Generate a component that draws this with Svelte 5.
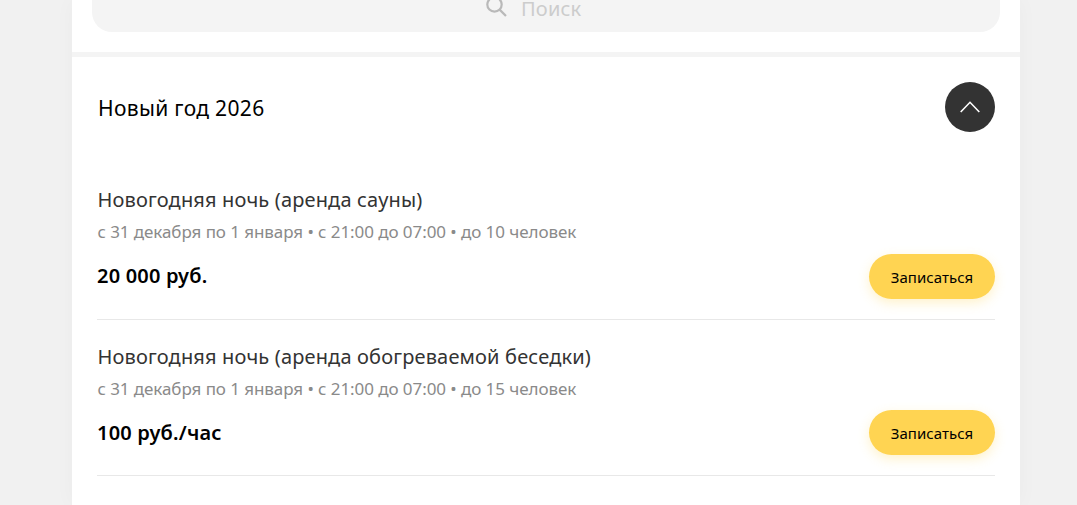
<script>
    let open = $state(true);
    let query = $state("");

    const services = [
        {
            id: 1,
            title: "Новогодняя ночь (аренда сауны)",
            description: "с 31 декабря по 1 января • с 21:00 до 07:00 • до 10 человек",
            price: "20 000 руб."
        },
        {
            id: 2,
            title: "Новогодняя ночь (аренда обогреваемой беседки)",
            description: "с 31 декабря по 1 января • с 21:00 до 07:00 • до 15 человек",
            price: "100 руб./час"
        }
    ];
</script>

<div class="page">
    <main class="container">
        <div class="search">
            <label class="search-field">
                <svg class="search-icon" viewBox="0 0 22 22" width="22" height="22">
                    <circle cx="8.5" cy="8.5" r="7.2" />
                    <path d="M13.6 13.6L20 20" />
                </svg>
                <input type="text" placeholder="Поиск" bind:value={query} />
            </label>
        </div>

        <section class="category">
            <header class="category-header">
                <h2>Новый год 2026</h2>
                <button class="toggle" class:closed={!open} aria-label="Свернуть" onclick={() => (open = !open)}>
                    <svg viewBox="0 0 20 12" width="20" height="12">
                        <path d="M0.7 11L10 1.3L19.3 11" />
                    </svg>
                </button>
            </header>

            {#if open}
                <ul class="services">
                    {#each services as service (service.id)}
                        <li class="service">
                            <h3>{service.title}</h3>
                            <p>{service.description}</p>
                            <div class="service-footer">
                                <strong class="price">{service.price}</strong>
                                <button class="btn">Записаться</button>
                            </div>
                        </li>
                    {/each}
                </ul>
            {/if}
        </section>
    </main>
</div>

<style>
    :global(body) {
        background: #f1f1f1;
        overflow: hidden;
    }

    .page {
        height: 505px;
        overflow: hidden;
        padding: 0 57px 0 72px;
        font-family: "Segoe UI", "Noto Sans", "Open Sans", sans-serif;
        color: #000;
    }

    .container {
        box-sizing: border-box;
        height: 505px;
        background: #fff;
        box-shadow: 0 0 20px rgba(0, 0, 0, 0.03);
    }

    .search {
        padding: 0 20px 20px;
        border-bottom: 5px solid #f4f4f4;
    }

    .search-field {
        display: flex;
        justify-content: center;
        height: 32px;
        background: #f4f4f4;
        border-radius: 0 0 20px 20px;
        overflow: hidden;
    }

    .search-icon {
        flex: none;
        margin: -4px 13px 0 0;
        fill: none;
        stroke: #b9b9b9;
        stroke-width: 2.2;
    }

    .search input {
        width: 85px;
        height: 28px;
        margin-top: -6px;
        padding: 0;
        border: none;
        outline: none;
        background: transparent;
        font-family: inherit;
        font-size: 20px;
        letter-spacing: 0.2px;
    }

    .search input::placeholder {
        color: #ccc;
        opacity: 1;
    }

    .category {
        padding: 25px 25px 0;
    }

    .category-header {
        display: flex;
        justify-content: space-between;
        align-items: center;
        height: 50px;
        padding-left: 1px;
        margin-bottom: 31.4px;
    }

    h2 {
        margin: 2px 0 0;
        font-size: 21px;
        font-weight: 400;
        letter-spacing: 0.33px;
        line-height: 30px;
    }

    .toggle {
        display: flex;
        align-items: center;
        justify-content: center;
        width: 50px;
        height: 50px;
        margin-right: 0.5px;
        padding: 0;
        border: none;
        border-radius: 50%;
        background: #333;
        cursor: pointer;
    }

    .toggle svg {
        fill: none;
        stroke: #fff;
        stroke-width: 1.6;
    }

    .toggle.closed svg {
        transform: rotate(180deg);
    }

    .services {
        list-style: none;
        margin: 0;
        padding: 0;
    }

    .service {
        box-sizing: border-box;
        height: 156.4px;
        padding-top: 22px;
        border-bottom: 1px solid #e8e8e8;
    }

    h3 {
        margin: 0 0 4px 0.5px;
        color: #333;
        font-size: 20px;
        font-weight: 400;
        letter-spacing: 0.16px;
        line-height: 30px;
    }

    p {
        margin: 0;
        padding-left: 0.5px;
        color: #8a8a8a;
        font-size: 17px;
        font-weight: 400;
        letter-spacing: -0.07px;
        line-height: 26px;
    }

    .service-footer {
        display: flex;
        justify-content: space-between;
        align-items: center;
        height: 45px;
        margin-top: 8.6px;
    }

    .price {
        margin-top: -0.6px;
        font-size: 20px;
        font-weight: 600;
        letter-spacing: 0.2px;
        line-height: 28px;
    }

    .btn {
        width: 126px;
        height: 45px;
        padding: 1px 0 0;
        border: none;
        border-radius: 23px;
        background: #ffd452;
        box-shadow: 0 4px 12px rgba(255, 212, 82, 0.3);
        font-family: inherit;
        font-size: 15px;
        letter-spacing: 0.05px;
        color: #000;
        cursor: pointer;
    }
</style>
